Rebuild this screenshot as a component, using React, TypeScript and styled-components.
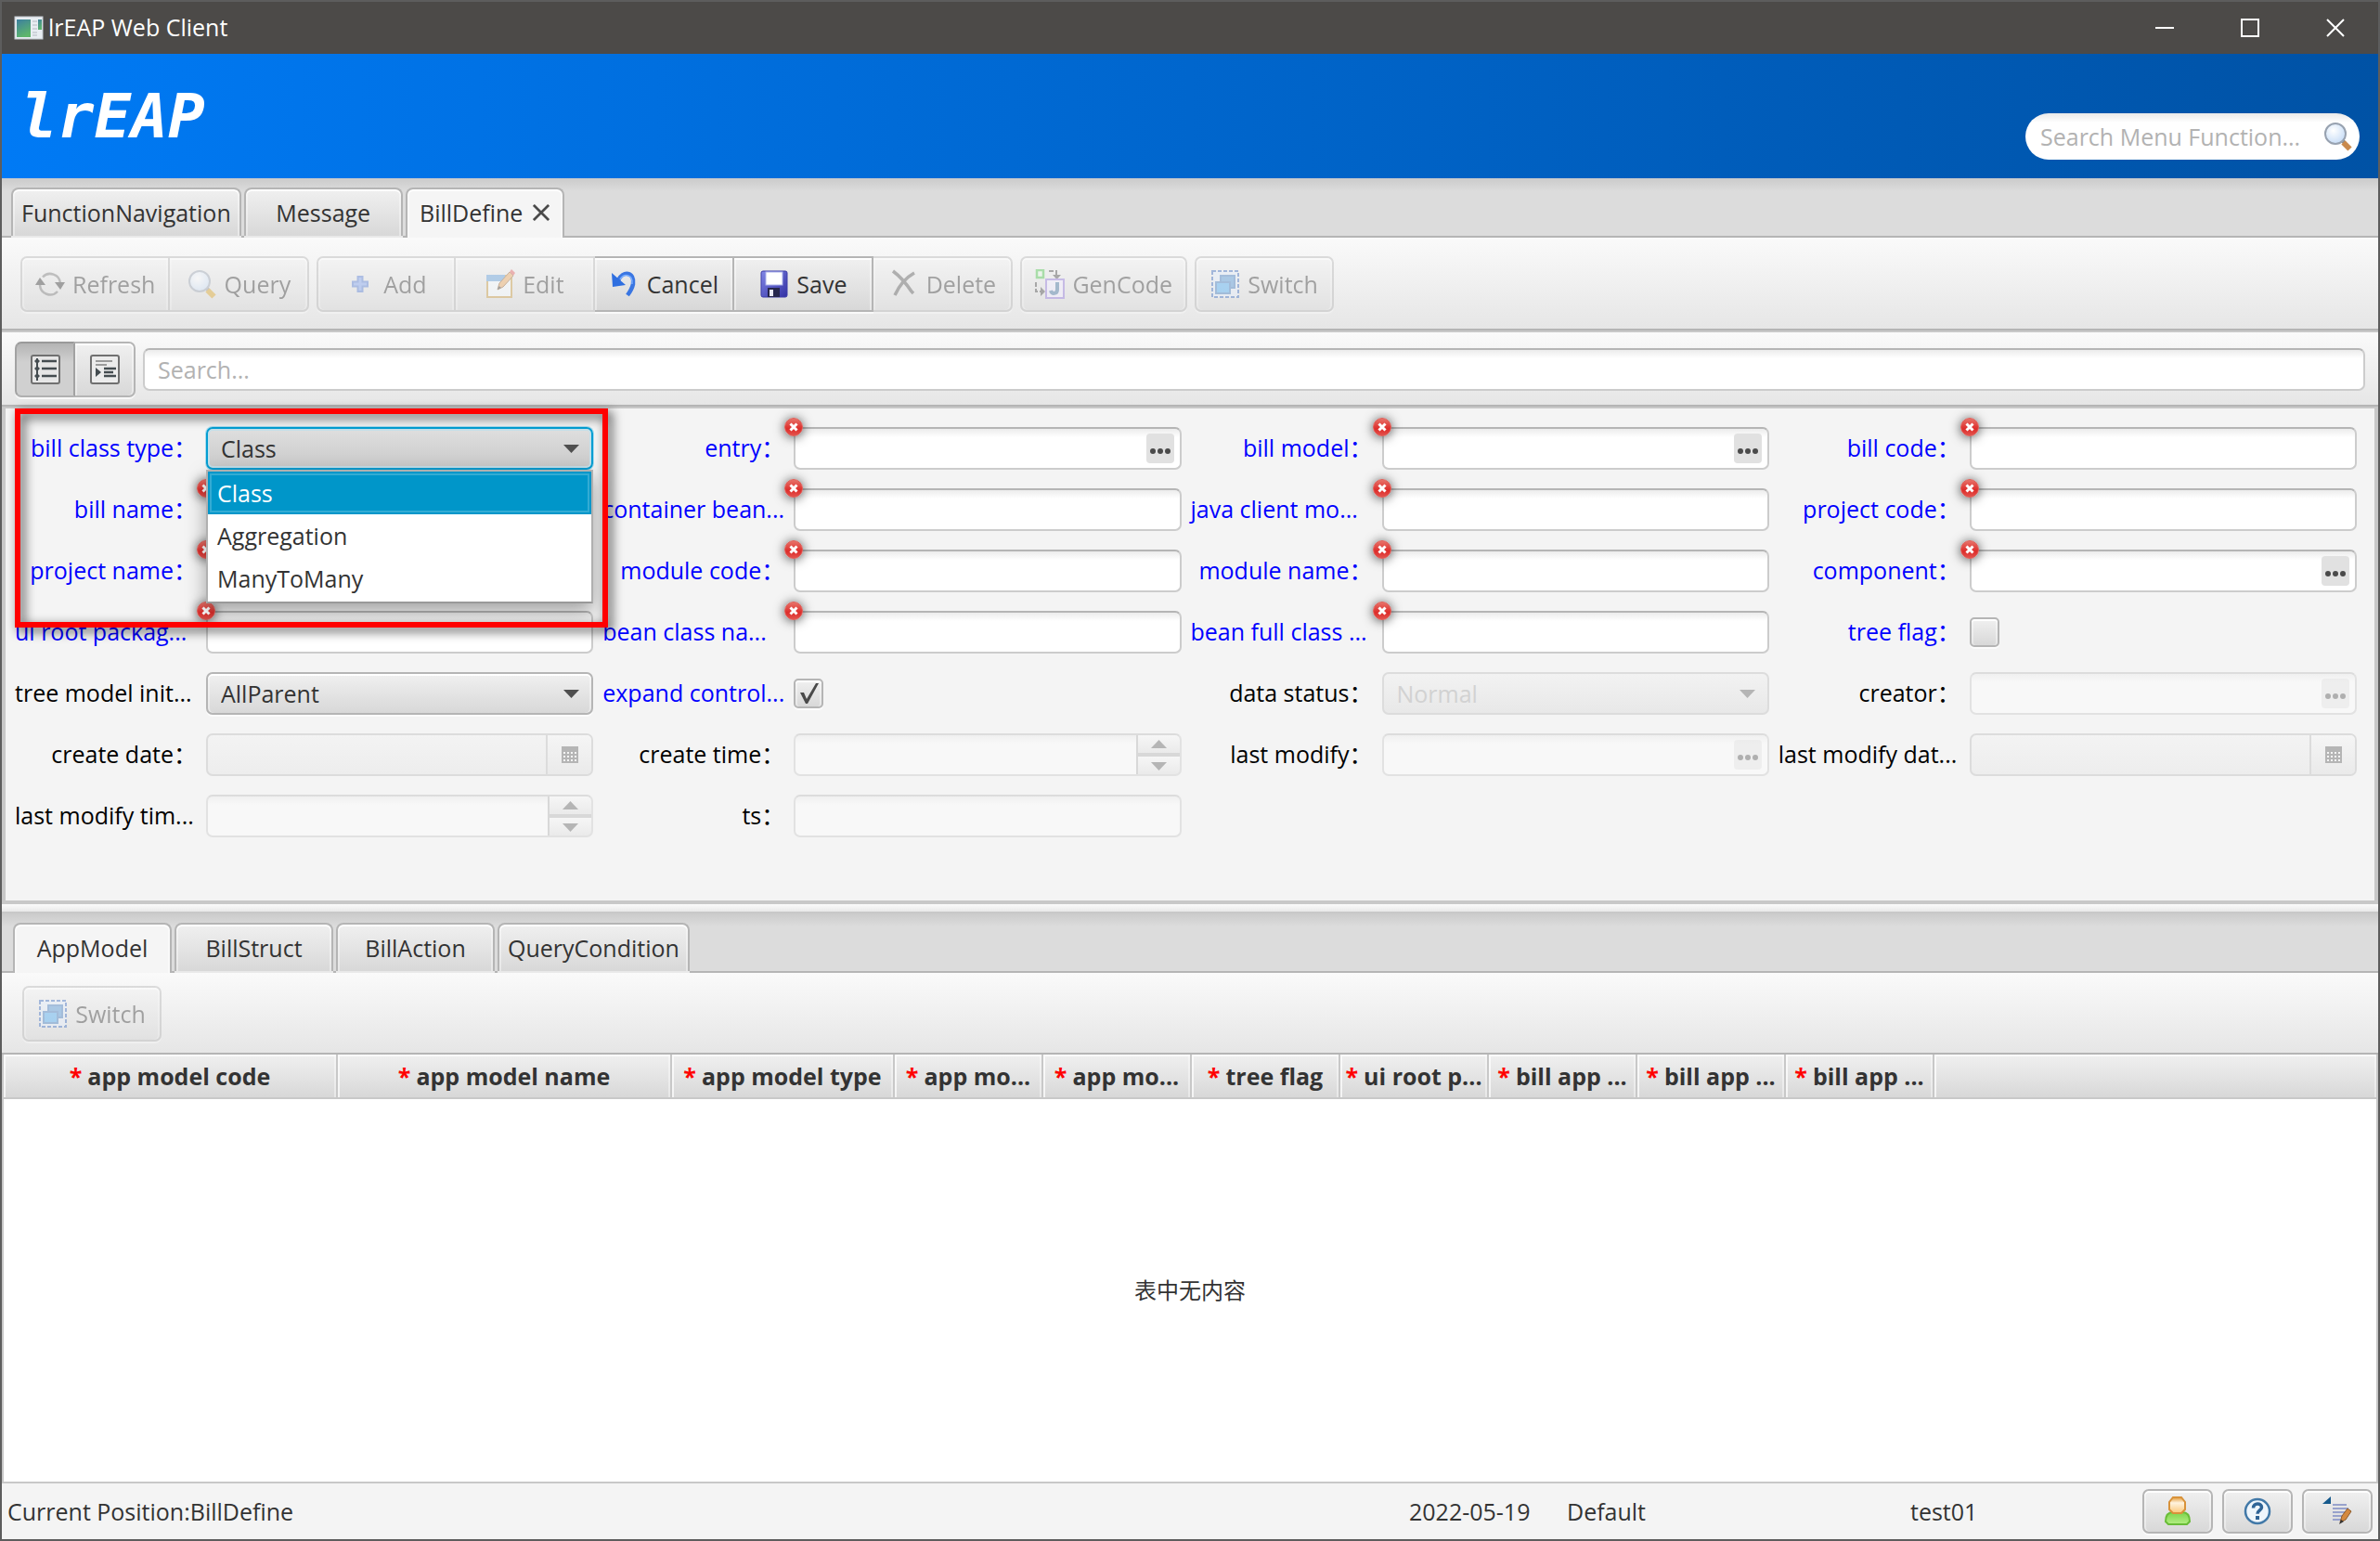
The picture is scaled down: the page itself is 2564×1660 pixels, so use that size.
import React, { useState } from "react";
import styled, { createGlobalStyle, css } from "styled-components";

const GlobalStyle = createGlobalStyle`
  *, *::before, *::after { box-sizing: border-box; }
  body {
    margin: 0;
    background: #5d5d5d;
    color: #333333;
    font-family: "Open Sans", "Noto Sans CJK SC", sans-serif;
    font-size: 25px;
    line-height: 32px;
  }
  button, input, select { font: inherit; color: inherit; margin: 0; }
`;

const buttonFace = css`
  background: linear-gradient(#f0f0f0, #d8d8d8);
  box-shadow: inset 0 2px 0 #ffffff, inset 2px 0 0 rgba(255, 255, 255, 0.4),
    inset -2px 0 0 rgba(255, 255, 255, 0.4), 0 2px 0 rgba(255, 255, 255, 0.7);
`;

/* ---------- window frame ---------- */

const Window = styled.div`
  display: flex;
  flex-direction: column;
  min-height: 100vh;
  border: 2px solid #5d5d5d;
  background: #f4f4f4;
`;

const TitleBar = styled.header`
  display: flex;
  align-items: center;
  height: 56px;
  padding-left: 12px;
  background: #4c4a48;
  color: #ffffff;
`;

const WindowTitle = styled.span`
  flex: 1;
  padding-left: 4px;
  line-height: 28px;
  padding-bottom: 2px;
`;

const WindowButton = styled.button`
  display: grid;
  place-items: center;
  width: 92px;
  height: 56px;
  padding: 0;
  border: 0;
  background: transparent;
`;

const Banner = styled.div`
  display: flex;
  align-items: flex-end;
  justify-content: space-between;
  height: 134px;
  padding: 0 20px 20px 20px;
  background: linear-gradient(90deg, #007af5, #0052a5);
`;

const Logo = styled.h1`
  margin: 0;
  color: #ffffff;
  font: italic bold 66px/92px "DejaVu Sans Mono", monospace;
`;

const MenuSearch = styled.label`
  display: flex;
  align-items: center;
  width: 360px;
  height: 50px;
  padding: 0 7px 0 16px;
  border-radius: 25px;
  background: linear-gradient(#e9e9e9, #ffffff 10px);
`;

const BareInput = styled.input`
  flex: 1;
  min-width: 0;
  width: 100%;
  height: 100%;
  padding: 0;
  border: 0;
  outline: 0;
  background: transparent;
  &::placeholder { color: #b2b2b2; opacity: 1; }
`;

/* ---------- tabs ---------- */

const TabStrip = styled.div<{ $inset: number }>`
  display: flex;
  align-items: flex-end;
  gap: 3px;
  height: 64px;
  padding-left: ${(p) => p.$inset}px;
  border-bottom: 2px solid #b5b5b5;
  background: linear-gradient(#cbcbcb, #dcdcdc 14px);
`;

const Tab = styled.button<{ $active?: boolean }>`
  display: flex;
  align-items: center;
  justify-content: center;
  gap: 11px;
  min-width: 171px;
  height: 52px;
  padding: 0 9px;
  border: 2px solid #b5b5b5;
  border-bottom: 0;
  border-radius: 8px 8px 0 0;
  white-space: nowrap;
  ${buttonFace}
  ${(p) =>
    p.$active &&
    css`
      height: 54px;
      margin-bottom: -2px;
      padding-bottom: 2px;
      background: #f5f5f5;
    `}
`;

/* ---------- toolbars ---------- */

const Toolbar = styled.div<{ $compact?: boolean }>`
  display: flex;
  gap: 8px;
  padding: ${(p) => (p.$compact ? "14px 22px 12px" : "20px 20px 18px")};
  border-bottom: 2px solid #b5b5b5;
  background: linear-gradient(#fafafa, #e6e6e6);
`;

const ButtonGroup = styled.div`
  display: flex;
`;

const ToolButton = styled.button`
  display: flex;
  align-items: center;
  justify-content: center;
  gap: 8px;
  min-width: 150px;
  height: 60px;
  padding: 0 14px;
  border: 2px solid #b5b5b5;
  border-left-width: 0;
  white-space: nowrap;
  ${buttonFace}
  &:first-child { border-left-width: 2px; border-radius: 7px 0 0 7px; }
  &:last-child { border-radius: 0 7px 7px 0; }
  &:only-child { border-radius: 7px; }
  &:disabled { color: inherit; opacity: 0.42; }
`;

const SearchStrip = styled.div`
  display: flex;
  align-items: center;
  gap: 8px;
  padding: 10px 14px 8px 14px;
  border-top: 2px solid #c8c8c8;
  border-bottom: 2px solid #b5b5b5;
  background: linear-gradient(#fafafa, #e6e6e6);
`;

const ToggleButton = styled.button<{ $on?: boolean }>`
  display: grid;
  place-items: center;
  width: 65px;
  height: 60px;
  padding: 0;
  border: 2px solid #b5b5b5;
  ${buttonFace}
  &:first-child { border-radius: 7px 0 0 7px; }
  &:last-child { border-left: 0; border-radius: 0 7px 7px 0; }
  ${(p) =>
    p.$on &&
    css`
      border-color: #999999 #a2a2a2 #b0b0b0;
      background: linear-gradient(#b4b4b4, #d0d0d0 20px);
      box-shadow: 0 2px 0 rgba(255, 255, 255, 0.7);
    `}
`;

/* ---------- form ---------- */

const fieldBox = css<{ $disabled?: boolean }>`
  width: 100%;
  height: 46px;
  border: 2px solid #cccccc;
  border-top-color: #b5b5b5;
  border-radius: 7px;
  background: linear-gradient(#ececec, #ffffff 9px);
  ${(p) =>
    p.$disabled &&
    css`
      border-color: #dcdcdc #e2e2e2 #e2e2e2;
      background: linear-gradient(#f0f0f0, #f8f8f8 9px);
    `}
`;

const FormPanel = styled.form`
  position: relative;
  display: grid;
  grid-template-columns: repeat(4, 196px minmax(0, 1fr));
  gap: 20px 10px;
  padding: 20px 19px 68px 10px;
  border: 4px solid #c8c8c8;
  border-top-width: 2px;
  background: #f4f4f4;
`;

const FieldLabel = styled.label<{ $required?: boolean; $cut?: boolean }>`
  line-height: 44px;
  text-align: ${(p) => (p.$cut ? "left" : "right")};
  white-space: nowrap;
  color: ${(p) => (p.$required ? "#0000ff" : "#000000")};
`;

const Cell = styled.div`
  position: relative;
  display: flex;
  align-items: center;
  height: 46px;
`;

const Field = styled.div<{ $disabled?: boolean }>`
  ${fieldBox}
  display: flex;
  align-items: center;
  overflow: hidden;
`;

const FieldInput = styled(BareInput)`
  padding: 0 14px;
`;

const SearchField = styled(Field)`
  flex: 1;
`;

const MoreButton = styled.button`
  display: grid;
  place-items: center;
  width: 30px;
  height: 32px;
  margin-right: 6px;
  padding: 0;
  border: 0;
  border-radius: 4px;
  background: #e1e1e1;
  &:disabled { opacity: 0.42; }
`;

const DateButton = styled.button`
  display: grid;
  place-items: center;
  width: 49px;
  height: 42px;
  padding: 0;
  border: 0;
  border-left: 2px solid #dcdcdc;
  background: linear-gradient(#f5f5f5, #eaeaea);
`;

const DateField = styled(Field)`
  border-color: #dcdcdc;
  background: linear-gradient(#f3f3f3, #ededed);
`;

const Stepper = styled.div`
  display: flex;
  flex-direction: column;
  gap: 4px;
  width: 47px;
  height: 42px;
  border-left: 2px solid #d8d8d8;
  background: #d8d8d8;
`;

const StepButton = styled.button`
  display: grid;
  flex: 1;
  place-items: center;
  padding: 0;
  border: 0;
  background: linear-gradient(#f6f6f6, #eaeaea);
`;

const SelectWrap = styled.div`
  display: grid;
  flex: 1;
  align-items: center;
  > * { grid-area: 1 / 1; }
  > svg { justify-self: end; margin-right: 15px; pointer-events: none; }
`;

const Select = styled.select<{ $open?: boolean }>`
  appearance: none;
  width: 100%;
  height: 46px;
  padding: 0 14px;
  border: 2px solid #b5b5b5;
  border-radius: 7px;
  outline: 0;
  ${buttonFace}
  ${(p) =>
    p.$open &&
    css`
      border-color: #039ed3;
      background: linear-gradient(#dfdfdf, #cacaca);
      box-shadow: inset 0 0 0 2px #c5e0ea, 0 0 0 1px #a9dcee;
    `}
  &:disabled {
    border-color: #dcdcdc;
    background: linear-gradient(#f2f2f2, #e8e8e8);
    box-shadow: none;
    color: #d2d2d2;
    opacity: 1;
  }
`;

const Popup = styled.ul`
  position: absolute;
  z-index: 2;
  top: 46px;
  left: 0;
  right: 0;
  margin: 0;
  padding: 0 0 2px;
  border: 2px solid #b0b0b0;
  border-bottom-color: #999999;
  background: #ffffff;
  box-shadow: 0 8px 20px rgba(0, 0, 0, 0.35);
  list-style: none;
`;

const Option = styled.li<{ $selected: boolean }>`
  height: 46px;
  padding: 0 8px;
  border: 2px solid transparent;
  line-height: 42px;
  cursor: default;
  ${(p) =>
    p.$selected &&
    css`
      border-color: #0096c9;
      background: #0096c9;
      box-shadow: inset 0 0 0 2px #33abd4;
      color: #ffffff;
    `}
`;

const CheckWrap = styled.div`
  display: grid;
  > * { grid-area: 1 / 1; }
  > svg { pointer-events: none; }
`;

const CheckInput = styled.input`
  appearance: none;
  width: 32px;
  height: 32px;
  border: 2px solid #b5b5b5;
  border-radius: 5px;
  ${buttonFace}
`;

const Badge = styled.span`
  position: absolute;
  z-index: 1;
  top: -10px;
  left: -10px;
  width: 20px;
  height: 20px;
  border-radius: 50%;
  box-shadow: 0 1px 12px rgba(0, 0, 0, 0.7);
  > svg { display: block; }
`;

const Highlight = styled.div`
  position: absolute;
  z-index: 3;
  top: 0;
  left: 10px;
  width: 639px;
  height: 236px;
  border: 6px solid #ff0000;
  filter: drop-shadow(4px 4px 6px rgba(0, 0, 0, 0.75));
  pointer-events: none;
`;

const SplitDivider = styled.div`
  height: 10px;
  border-bottom: 2px solid #c8c8c8;
  background: linear-gradient(#fbfbfb, #e8e8e8);
`;

/* ---------- table ---------- */

const TablePanel = styled.section`
  display: flex;
  flex: 1;
  flex-direction: column;
  border: 2px solid #c8c8c8;
  border-top: 0;
  background: #ffffff;
`;

const Table = styled.table`
  width: 100%;
  table-layout: fixed;
  border-collapse: separate;
  border-spacing: 0;
`;

const HeadCell = styled.th`
  height: 48px;
  padding: 0;
  border-right: 2px solid #c8c8c8;
  border-bottom: 2px solid #c8c8c8;
  background: linear-gradient(#f0f0f0, #d8d8d8);
  box-shadow: inset 2px 2px 0 rgba(255, 255, 255, 0.7), inset -2px 0 0 rgba(255, 255, 255, 0.4);
  font-weight: bold;
  overflow: hidden;
  white-space: nowrap;
  &:last-child { border-right: 0; }
`;

const Star = styled.span`
  margin-right: 6px;
  color: #ff0000;
`;

const EmptyNote = styled.p`
  display: grid;
  flex: 1;
  place-items: center;
  margin: 0;
  font-size: 24px;
`;

/* ---------- status bar ---------- */

const StatusBar = styled.footer`
  display: flex;
  align-items: center;
  height: 60px;
  padding: 0 6px;
`;

const StatusText = styled.span<{ $width?: number }>`
  ${(p) => (p.$width ? `width: ${p.$width}px;` : "flex: 1;")}
  white-space: nowrap;
`;

const StatusActions = styled.div`
  display: flex;
  gap: 10px;
`;

const StatusButton = styled.button`
  display: grid;
  place-items: center;
  width: 76px;
  height: 48px;
  padding: 0;
  border: 2px solid #b5b5b5;
  border-radius: 7px;
  ${buttonFace}
`;

/* ---------- icons ---------- */

const Svg = ({ size = 32, children }: { size?: number; children: React.ReactNode }) => (
  <svg width={size} height={size} viewBox="0 0 32 32" fill="none" aria-hidden="true">
    {children}
  </svg>
);

const AppIcon = () => (
  <svg width="34" height="30" viewBox="0 0 34 30" aria-hidden="true">
    <defs>
      <linearGradient id="appg" x1="0" y1="0" x2="0.4" y2="1">
        <stop offset="0" stopColor="#3c7fa0" />
        <stop offset="1" stopColor="#5db56c" />
      </linearGradient>
    </defs>
    <rect x="2" y="3" width="30" height="24" fill="#e8edf2" stroke="#c3c9cf" />
    <rect x="4" y="6" width="15" height="19" fill="url(#appg)" />
    <rect x="27" y="6" width="4" height="11" fill="url(#appg)" />
    <path d="M21 8h5M21 12h5M21 16h5M21 20h5M21 23h5" stroke="#b4bac2" strokeWidth="1" />
  </svg>
);

const RefreshIcon = () => (
  <Svg>
    <path d="M8 8.500A11 11 0 0 1 27 15" stroke="#777" strokeWidth="2.500" />
    <path d="M24 24A11 11 0 0 1 5 17" stroke="#777" strokeWidth="2.500" />
    <path d="M21 14h11l-5 8zM0 17h11L5 9z" fill="#333" />
  </Svg>
);

const GlassIcon = ({ handle = "#d8a020" }: { handle?: string }) => (
  <Svg>
    <defs>
      <radialGradient id="lens" cx="0.4" cy="0.35" r="0.8">
        <stop offset="0" stopColor="#ffffff" />
        <stop offset="1" stopColor="#bcd6f5" />
      </radialGradient>
    </defs>
    <path d="M20 20l3 3" stroke="#888" strokeWidth="4" />
    <path d="M21.500 22.500l7 7" stroke={handle} strokeWidth="6" />
    <circle cx="13" cy="13" r="11" fill="url(#lens)" stroke="#98a2b0" strokeWidth="2" />
  </Svg>
);

const AddIcon = () => (
  <Svg>
    <path d="M12.500 8h5v5.500H23v5h-5.500V24h-5v-5.500H7v-5h5.500z" fill="#7b9fee" stroke="#5078d0" strokeWidth="2" />
  </Svg>
);

const EditIcon = () => (
  <Svg>
    <rect x="2" y="7" width="26" height="23" fill="#f4faff" stroke="#c5973c" strokeWidth="2" />
    <path d="M1 6h20v7H1z" fill="#5b9ad8" />
    <path d="M13 22l2-7L26 3l4 4-11 12z" fill="#e9a55a" stroke="#8a5a2a" />
    <path d="M26 3l2-3 4 4-2 3z" fill="#e05a5a" />
    <path d="M13 22l1.500-4 2.500 2z" fill="#333" />
  </Svg>
);

const CancelIcon = () => (
  <Svg>
    <path d="M9 12C14 1 27 3 25 16c-1 5-3 8-6 12" stroke="#3a76e2" strokeWidth="4.500" />
    <path d="M2 4l1 15 14-2z" fill="#2f6fe0" />
    <path d="M11 11C15 4 25 5 24 16" stroke="#7aaeff" strokeWidth="1.500" />
  </Svg>
);

const SaveIcon = () => (
  <Svg>
    <defs>
      <linearGradient id="disk" x1="0" y1="0" x2="1" y2="1">
        <stop offset="0" stopColor="#8187e6" />
        <stop offset="1" stopColor="#3230a4" />
      </linearGradient>
    </defs>
    <rect x="2" y="2" width="28" height="28" rx="2" fill="url(#disk)" stroke="#3d3ca8" strokeWidth="1" />
    <rect x="7" y="3" width="18" height="14" fill="#ffffff" stroke="#aab0ea" />
    <rect x="9" y="20" width="13" height="10" fill="#26264c" />
    <rect x="11" y="22" width="4" height="7" fill="#e8e8f4" />
  </Svg>
);

const DeleteIcon = () => (
  <Svg>
    <path d="M4 2c8 6 14 13 20 22l2 2" stroke="#555" strokeWidth="3.500" />
    <path d="M27 4C18 9 11 17 6 28" stroke="#555" strokeWidth="3.500" />
  </Svg>
);

const GenCodeIcon = () => (
  <Svg>
    <rect x="2" y="1" width="7" height="8" fill="#e4f8e4" stroke="#46c246" strokeWidth="2.500" />
    <path d="M15 2h8v6M1 14v10h5" stroke="#444" strokeWidth="2" strokeDasharray="5 2" />
    <path d="M19 6h9l-4.500 5zM6 19v10l5-5z" fill="#444" />
    <rect x="12" y="11" width="19" height="20" fill="#eeeaff" stroke="#8e74d8" strokeWidth="2" />
    <path d="M24 14v8c0 5-6 5-7 1" stroke="#3e6f9e" strokeWidth="4" />
  </Svg>
);

const SwitchIcon = () => (
  <Svg>
    <rect x="2" y="2" width="28" height="28" fill="#dfe9f8" stroke="#3566bb" strokeWidth="2" strokeDasharray="4 2" />
    <rect x="11" y="7" width="15" height="13" fill="#4b90d4" stroke="#3c78bd" strokeWidth="2" />
    <rect x="6" y="14" width="15" height="12" fill="#48a8f2" stroke="#3c78bd" strokeWidth="2" />
  </Svg>
);

const ListIcon = () => (
  <Svg>
    <rect x="1" y="1" width="30" height="30" rx="2" fill="#e6e6e6" stroke="#707070" strokeWidth="2" />
    <path d="M7 4v24" stroke="#444c50" strokeWidth="2" />
    <path d="M12 7h16M12 15h16M12 23h16" stroke="#444c50" strokeWidth="2.500" />
    <path d="M7 4l3 3-3 3-3-3zM7 12l3 3-3 3-3-3zM7 20l3 3-3 3-3-3z" fill="#444c50" />
  </Svg>
);

const IndentIcon = () => (
  <Svg>
    <rect x="1" y="1" width="30" height="30" rx="2" fill="#ececec" stroke="#707070" strokeWidth="2" />
    <path d="M6 7h18M6 11h12" stroke="#9b9b9b" strokeWidth="2" />
    <path d="M15 15h13M15 19h10M15 23h13" stroke="#444c50" strokeWidth="2.500" />
    <path d="M6 14l6 5-6 5z" fill="#444c50" />
  </Svg>
);

const CloseIcon = ({ size = 20, color = "#4a4a4a", stroke = 2 }) => (
  <svg width={size} height={size} viewBox="0 0 20 20" aria-hidden="true">
    <path d="M1 1l18 18M19 1L1 19" stroke={color} strokeWidth={stroke} />
  </svg>
);

const ErrorIcon = () => (
  <svg width="20" height="20" viewBox="0 0 20 20" aria-hidden="true">
    <defs>
      <linearGradient id="err" x1="0" y1="0" x2="0" y2="1">
        <stop offset="0" stopColor="#e8756c" />
        <stop offset="0.6" stopColor="#dd2c2a" />
        <stop offset="1" stopColor="#e4554f" />
      </linearGradient>
    </defs>
    <circle cx="10" cy="10" r="9.500" fill="url(#err)" stroke="#dc5f59" />
    <path d="M6.500 6.500l7 7M13.500 6.500l-7 7" stroke="#ffffff" strokeWidth="3" />
  </svg>
);

const Arrow = ({ up, dim }: { up?: boolean; dim?: boolean }) => (
  <svg width="17" height="10" viewBox="0 0 17 10" aria-hidden="true">
    <path d={up ? "M0 9h17L8.500 0z" : "M0 1h17L8.500 10z"} fill={dim ? "#b5b5b5" : "#4f4f4f"} />
  </svg>
);

const DotsIcon = () => (
  <svg width="24" height="14" viewBox="0 0 24 14" aria-hidden="true">
    <g fill="#4a4a4a">
      <circle cx="4" cy="10" r="3" />
      <circle cx="12" cy="10" r="3" />
      <circle cx="20" cy="10" r="3" />
    </g>
  </svg>
);

const CalendarIcon = () => (
  <svg width="20" height="20" viewBox="0 0 20 20" aria-hidden="true">
    <path d="M1 1h18v18H1z" fill="#b5b5b5" />
    <path d="M3 8h14M3 12h14M3 16h14" stroke="#f4f4f4" strokeWidth="2" strokeDasharray="2 2" />
  </svg>
);

const CheckIcon = () => (
  <Svg>
    <path d="M7 15h4l3 7L24 5h3L15 27h-2z" fill="#4a4a4a" />
  </Svg>
);

const UserIcon = () => (
  <Svg>
    <defs>
      <linearGradient id="body" x1="0" y1="0" x2="0" y2="1">
        <stop offset="0" stopColor="#7ed34c" />
        <stop offset="1" stopColor="#b4ef84" />
      </linearGradient>
      <linearGradient id="face" x1="0" y1="0" x2="0" y2="1">
        <stop offset="0" stopColor="#e49a35" />
        <stop offset="0.35" stopColor="#fff3df" />
        <stop offset="1" stopColor="#fbc777" />
      </linearGradient>
    </defs>
    <path d="M3 27c0-7 3-10 8-10h10c5 0 8 3 8 10l-3 3H6z" fill="url(#body)" stroke="#69bd38" strokeWidth="2" />
    <path d="M11 1h9l4 5v8l-4 4H11l-4-4V6z" fill="url(#face)" stroke="#d8923a" strokeWidth="2" />
  </Svg>
);

const HelpIcon = () => (
  <Svg>
    <circle cx="16" cy="16" r="13" fill="#eff6fc" stroke="#4279a8" strokeWidth="2.500" />
    <path d="M11.500 12.500c0-6 9-6 9-.8 0 3-4.500 3.300-4.500 7" stroke="#2f6496" strokeWidth="3.500" />
    <rect x="14" y="21" width="4" height="4" fill="#2f6496" />
  </Svg>
);

const NoteIcon = () => (
  <Svg>
    <path d="M0 8L9 0v8z" fill="#165a8c" />
    <path d="M11 9h15M11 13h17M11 17h13M11 21h12M11 25h9" stroke="#98a2cc" strokeWidth="2" />
    <path d="M19 28l2-7 6-8 4 3-6 9z" fill="#d4893f" stroke="#8d5a2b" strokeWidth="1" />
    <path d="M18 30l2-5 3 2z" fill="#333" />
  </Svg>
);

/* ---------- data ---------- */

type FieldKind = "text" | "open" | "select" | "more" | "check" | "date" | "time";

interface FieldSpec {
  label: string;
  kind: FieldKind;
  required?: boolean;
  disabled?: boolean;
  invalid?: boolean;
  value?: string;
}

const must = (label: string, kind: FieldKind = "text"): FieldSpec => ({
  label, kind, required: true, invalid: true,
});
const locked = (label: string, kind: FieldKind, value?: string): FieldSpec => ({
  label, kind, disabled: true, value,
});

const fields: FieldSpec[] = [
  { label: "bill class type：", kind: "open", required: true },
  must("entry：", "more"),
  must("bill model：", "more"),
  must("bill code："),
  must("bill name："),
  must("container bean..."),
  must("java client mo..."),
  must("project code："),
  must("project name："),
  must("module code："),
  must("module name："),
  must("component：", "more"),
  must("ui root packag..."),
  must("bean class na..."),
  must("bean full class ..."),
  { label: "tree flag：", kind: "check", required: true },
  { label: "tree model init...", kind: "select", value: "AllParent" },
  { label: "expand control...", kind: "check", required: true, value: "on" },
  locked("data status：", "select", "Normal"),
  locked("creator：", "more"),
  locked("create date：", "date"),
  locked("create time：", "time"),
  locked("last modify：", "more"),
  locked("last modify dat...", "date"),
  locked("last modify tim...", "time"),
  locked("ts：", "text"),
];

const classTypes = ["Class", "Aggregation", "ManyToMany"];

const toolGroups = [
  [
    { text: "Refresh", icon: <RefreshIcon /> },
    { text: "Query", icon: <GlassIcon /> },
  ],
  [
    { text: "Add", icon: <AddIcon /> },
    { text: "Edit", icon: <EditIcon /> },
    { text: "Cancel", icon: <CancelIcon />, enabled: true },
    { text: "Save", icon: <SaveIcon />, enabled: true },
    { text: "Delete", icon: <DeleteIcon /> },
  ],
  [{ text: "GenCode", icon: <GenCodeIcon /> }],
  [{ text: "Switch", icon: <SwitchIcon /> }],
] as { text: string; icon: React.ReactNode; enabled?: boolean }[][];

const columns = [
  { text: "app model code", width: 360 },
  { text: "app model name", width: 360 },
  { text: "app model type", width: 240 },
  { text: "app mo...", width: 160 },
  { text: "app mo...", width: 160 },
  { text: "tree flag", width: 160 },
  { text: "ui root p...", width: 160 },
  { text: "bill app ...", width: 160 },
  { text: "bill app ...", width: 160 },
  { text: "bill app ...", width: 160 },
];

/* ---------- form controls ---------- */

function ClassTypeCombo({ id }: { id: string }) {
  const [value, setValue] = useState("Class");
  return (
    <>
      <SelectWrap>
        <Select id={id} $open value={value} onChange={(e) => setValue(e.target.value)}>
          {classTypes.map((t) => <option key={t}>{t}</option>)}
        </Select>
        <Arrow />
      </SelectWrap>
      <Popup role="listbox" aria-labelledby={id}>
        {classTypes.map((t) => (
          <Option key={t} role="option" aria-selected={t === value} $selected={t === value} onClick={() => setValue(t)}>
            {t}
          </Option>
        ))}
      </Popup>
    </>
  );
}

function Control({ id, spec }: { id: string; spec: FieldSpec }) {
  const { kind, disabled, value } = spec;
  switch (kind) {
    case "open":
      return <ClassTypeCombo id={id} />;
    case "select":
      return (
        <SelectWrap>
          <Select id={id} disabled={disabled} defaultValue={value}>
            <option>{value}</option>
          </Select>
          <Arrow dim={disabled} />
        </SelectWrap>
      );
    case "check":
      return (
        <CheckWrap>
          <CheckInput type="checkbox" id={id} defaultChecked={value === "on"} />
          {value === "on" && <CheckIcon />}
        </CheckWrap>
      );
    case "date":
      return (
        <DateField $disabled={disabled}>
          <FieldInput id={id} disabled={disabled} />
          <DateButton type="button" disabled={disabled} aria-label="Pick date"><CalendarIcon /></DateButton>
        </DateField>
      );
    case "time":
      return (
        <Field $disabled={disabled}>
          <FieldInput id={id} disabled={disabled} />
          <Stepper>
            <StepButton type="button" disabled={disabled} aria-label="Later"><Arrow up dim /></StepButton>
            <StepButton type="button" disabled={disabled} aria-label="Earlier"><Arrow dim /></StepButton>
          </Stepper>
        </Field>
      );
    default:
      return (
        <Field $disabled={disabled}>
          <FieldInput id={id} disabled={disabled} />
          {kind === "more" && (
            <MoreButton type="button" disabled={disabled} aria-label="Choose"><DotsIcon /></MoreButton>
          )}
        </Field>
      );
  }
}

/* ---------- page ---------- */

export default function App() {
  return (
    <>
      <GlobalStyle />
      <Window>
        <TitleBar>
          <AppIcon />
          <WindowTitle>lrEAP Web Client</WindowTitle>
          <WindowButton aria-label="Minimize">
            <svg width="20" height="20" viewBox="0 0 20 20"><path d="M0 10h20" stroke="#fff" strokeWidth="2" /></svg>
          </WindowButton>
          <WindowButton aria-label="Maximize">
            <svg width="20" height="20" viewBox="0 0 20 20"><path d="M1 1h18v18H1z" fill="none" stroke="#fff" strokeWidth="2" /></svg>
          </WindowButton>
          <WindowButton aria-label="Close"><CloseIcon color="#ffffff" /></WindowButton>
        </TitleBar>

        <Banner>
          <Logo>lrEAP</Logo>
          <MenuSearch>
            <BareInput placeholder="Search Menu Function..." aria-label="Search Menu Function" />
            <GlassIcon handle="#c98a4e" />
          </MenuSearch>
        </Banner>

        <TabStrip $inset={10} role="tablist">
          <Tab role="tab">FunctionNavigation</Tab>
          <Tab role="tab">Message</Tab>
          <Tab role="tab" aria-selected $active>
            BillDefine <CloseIcon size={18} stroke={3} />
          </Tab>
        </TabStrip>

        <Toolbar>
          {toolGroups.map((group, g) => (
            <ButtonGroup key={g}>
              {group.map((b) => (
                <ToolButton key={b.text} disabled={!b.enabled}>
                  {b.icon}
                  {b.text}
                </ToolButton>
              ))}
            </ButtonGroup>
          ))}
        </Toolbar>

        <SearchStrip>
          <ButtonGroup>
            <ToggleButton $on aria-pressed aria-label="Category mode"><ListIcon /></ToggleButton>
            <ToggleButton aria-pressed={false} aria-label="Name mode"><IndentIcon /></ToggleButton>
          </ButtonGroup>
          <SearchField>
            <FieldInput placeholder="Search..." aria-label="Search" />
          </SearchField>
        </SearchStrip>

        <FormPanel onSubmit={(e) => e.preventDefault()}>
          {fields.map((spec, i) => {
            const id = `field-${i}`;
            return (
              <React.Fragment key={id}>
                <FieldLabel htmlFor={id} $required={spec.required} $cut={spec.label.endsWith("...")}>
                  {spec.label}
                </FieldLabel>
                <Cell>
                  <Control id={id} spec={spec} />
                  {spec.invalid && <Badge><ErrorIcon /></Badge>}
                </Cell>
              </React.Fragment>
            );
          })}
          <Highlight />
        </FormPanel>

        <SplitDivider />

        <TabStrip $inset={12} role="tablist">
          <Tab role="tab" aria-selected $active>AppModel</Tab>
          <Tab role="tab">BillStruct</Tab>
          <Tab role="tab">BillAction</Tab>
          <Tab role="tab">QueryCondition</Tab>
        </TabStrip>

        <Toolbar $compact>
          <ButtonGroup>
            <ToolButton disabled>
              <SwitchIcon />
              Switch
            </ToolButton>
          </ButtonGroup>
        </Toolbar>

        <TablePanel>
          <Table>
            <colgroup>
              {columns.map((c, i) => <col key={i} style={{ width: c.width }} />)}
              <col />
            </colgroup>
            <thead>
              <tr>
                {columns.map((c, i) => (
                  <HeadCell key={i} scope="col">
                    <Star>*</Star>
                    {c.text}
                  </HeadCell>
                ))}
                <HeadCell aria-hidden="true" />
              </tr>
            </thead>
          </Table>
          <EmptyNote>表中无内容</EmptyNote>
        </TablePanel>

        <StatusBar>
          <StatusText>Current Position:BillDefine</StatusText>
          <StatusText $width={170}>2022-05-19</StatusText>
          <StatusText $width={370}>Default</StatusText>
          <StatusText $width={250}>test01</StatusText>
          <StatusActions>
            <StatusButton aria-label="User"><UserIcon /></StatusButton>
            <StatusButton aria-label="Help"><HelpIcon /></StatusButton>
            <StatusButton aria-label="Notes"><NoteIcon /></StatusButton>
          </StatusActions>
        </StatusBar>
      </Window>
    </>
  );
}
